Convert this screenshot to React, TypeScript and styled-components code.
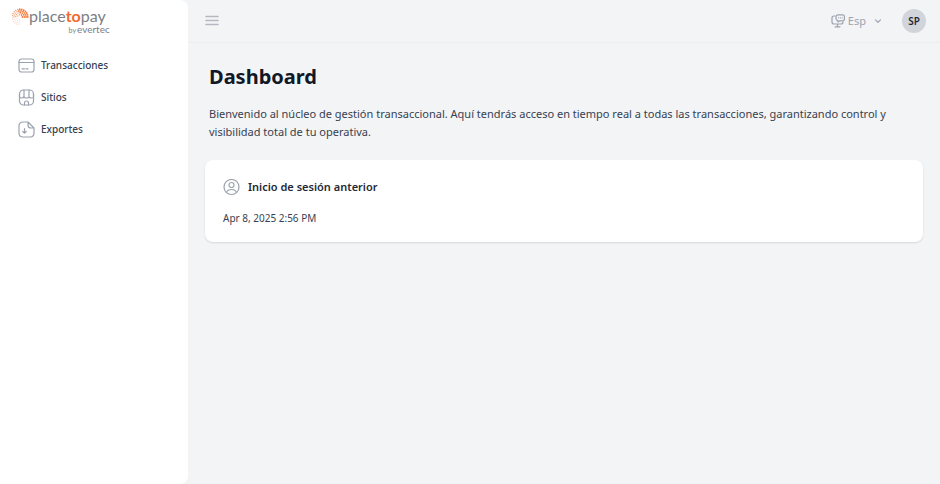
import React from "react";
import styled, { createGlobalStyle } from "styled-components";

const GlobalStyle = createGlobalStyle`
  *, *::before, *::after { box-sizing: border-box; }
  body {
    margin: 0;
    background: #f3f4f6;
    color: #1f2937;
    font-family: "Noto Sans", "Open Sans", sans-serif;
  }
  h1, h2, p, ul { margin: 0; padding: 0; }
  button { border: 0; padding: 0; background: none; font: inherit; color: inherit; cursor: pointer; }
`;

const Page = styled.div`
  display: flex;
  min-height: 100vh;
`;

const Sidebar = styled.aside`
  flex: 0 0 188px;
  background: #fff;
  border-radius: 0 8px 8px 0;
`;

const Logo = styled.a`
  display: flex;
  align-items: flex-start;
  height: 40px;
  padding: 8px 0 0 12px;
  text-decoration: none;
  color: #7b7f86;
`;

const Wordmark = styled.span`
  display: flex;
  flex-direction: column;
  align-items: flex-end;
  font-family: Lato, sans-serif;
`;

const Brand = styled.span`
  margin-right: 4px;
  font-size: 16px;
  line-height: 16px;
`;

const Accent = styled.span`
  color: #f26a2e;
  font-weight: 700;
`;

const Byline = styled.span`
  font-size: 10px;
  line-height: 10px;
`;

const By = styled.small`
  font-size: 7px;
  margin-right: 1px;
`;

const NavList = styled.ul`
  display: flex;
  flex-direction: column;
  gap: 8px;
  padding: 13px 12px;
  list-style: none;
`;

const NavLink = styled.a`
  display: flex;
  align-items: center;
  gap: 6px;
  height: 24px;
  padding-left: 6px;
  color: #374151;
  font-size: 10px;
  font-weight: 500;
  text-decoration: none;
`;

const Icon = styled.svg<{ $size: number }>`
  flex: none;
  width: ${(p) => p.$size}px;
  height: ${(p) => p.$size}px;
  fill: none;
  stroke: #9ca3af;
  stroke-width: 1.2;
  stroke-linecap: round;
  stroke-linejoin: round;
`;

const Content = styled.div`
  flex: 1;
  min-width: 0;
`;

const Topbar = styled.header`
  display: flex;
  align-items: center;
  justify-content: space-between;
  height: 43px;
  padding: 0 14px 1px 17px;
  border-bottom: 1px solid #eceef1;
`;

const MenuButton = styled.button`
  display: flex;
`;

const Actions = styled.div`
  display: flex;
  align-items: center;
  gap: 20px;
`;

const Language = styled.button`
  display: flex;
  align-items: center;
  gap: 3px;
  color: #9ca3af;
  font-size: 11px;
  line-height: 16px;
`;

const Chevron = styled(Icon)`
  margin-left: 5px;
`;

const Avatar = styled.button`
  width: 24px;
  height: 24px;
  border-radius: 50%;
  background: #d1d5db;
  color: #1f2937;
  font-size: 10px;
  font-weight: 600;
`;

const Main = styled.main`
  padding: 20px 17px;
`;

const Title = styled.h1`
  padding-left: 4px;
  color: #111827;
  font-size: 20px;
  line-height: 28px;
  font-weight: 700;
`;

const Intro = styled.p`
  padding: 14px 4px 0;
  font-size: 11px;
  line-height: 18px;
  color: #374151;
`;

const Card = styled.section`
  margin-top: 19px;
  padding: 18px 18px 16px;
  border-radius: 8px;
  background: #fff;
  box-shadow: 0 1px 2px rgba(0, 0, 0, 0.12);
`;

const CardHeading = styled.h2`
  display: flex;
  align-items: center;
  gap: 8px;
  font-size: 11px;
  line-height: 18px;
  font-weight: 600;
`;

const CardText = styled.p`
  margin-top: 14px;
  font-size: 10px;
  line-height: 16px;
  color: #374151;
`;

const dots: { x: number; y: number; r: number; o: number }[] = [];
[2.4, 4.3, 6.1, 7.8].forEach((radius) => {
  const count = Math.round(radius * 2.2) + 1;
  for (let i = 0; i < count; i++) {
    const t = i / (count - 1);
    const angle = Math.PI * (0.55 + t * 1.45);
    dots.push({
      x: 8 + Math.cos(angle) * radius,
      y: 9 + Math.sin(angle) * radius,
      r: t > 0.6 ? 0.9 : t > 0.3 ? 0.7 : 0.5,
      o: t > 0.6 ? 1 : t > 0.3 ? 0.7 : 0.4,
    });
  }
});

const LogoMark = () => (
  <Icon $size={17} viewBox="0 0 17 17" aria-hidden="true">
    {dots.map((d, i) => (
      <circle key={i} cx={d.x} cy={d.y} r={d.r} fill="#f47b3c" stroke="none" opacity={d.o} />
    ))}
  </Icon>
);

const CardIcon = () => (
  <Icon $size={17} viewBox="0 0 17 17" aria-hidden="true">
    <rect x="1" y="2" width="15" height="13" rx="2.5" />
    <path d="M1 5.5h15M4 11.8h2.5M8 11.8h2" />
  </Icon>
);

const StoreIcon = () => (
  <Icon $size={17} viewBox="0 0 17 17" aria-hidden="true">
    <rect x="1.500" y="1" width="14" height="15" rx="4" />
    <path d="M1.500 5v2.500q0 1.500 2 1.500T6 7.500Q6 9 8.500 9T11 7.500Q11 9 13.500 9t2-1.500V5M6 1v6.500M11 1v6.500M6.500 16v-2q0-2 2-2t2 2v2" />
  </Icon>
);

const ExportIcon = () => (
  <Icon $size={17} viewBox="0 0 17 17" aria-hidden="true">
    <path d="M10 1H5Q1 1 1 5v7q0 4 4 4h7q4 0 4-4V7zM10 1v3q0 3 3 3h3" />
    <path d="M6.500 7.500v4.500M4.800 10.500l1.700 1.700 1.700-1.700" />
  </Icon>
);

const navItems = [
  { label: "Transacciones", icon: <CardIcon /> },
  { label: "Sitios", icon: <StoreIcon /> },
  { label: "Exportes", icon: <ExportIcon /> },
];

export default function App() {
  return (
    <>
      <GlobalStyle />
      <Page>
        <Sidebar>
          <Logo href="#">
            <LogoMark />
            <Wordmark>
              <Brand>
                place<Accent>to</Accent>pay
              </Brand>
              <Byline>
                <By>by</By>evertec
              </Byline>
            </Wordmark>
          </Logo>
          <nav>
            <NavList>
              {navItems.map((item) => (
                <li key={item.label}>
                  <NavLink href="#">
                    {item.icon}
                    {item.label}
                  </NavLink>
                </li>
              ))}
            </NavList>
          </nav>
        </Sidebar>
        <Content>
          <Topbar>
            <MenuButton type="button" aria-label="Menu">
              <Icon $size={14} viewBox="0 0 14 14" aria-hidden="true">
                <path d="M1 2.500h12M1 6.500h12M1 10.500h12" strokeWidth="1.500" stroke="#b3b8c1" />
              </Icon>
            </MenuButton>
            <Actions>
              <Language type="button">
                <Icon $size={14} viewBox="0 0 14 14" aria-hidden="true">
                  <path d="M4 2H3Q1 2 1 4v4q0 2 2 2h7q2 0 2-2M6.500 10v2.500M4 12.800h5" />
                  <path d="M7 .8h4.500q2 0 2 2v2q0 2-2 2H9L7 8V6.700Q5 6.500 5 4.500V2.800q0-2 2-2zM7.500 3.800h.1M9.300 3.800h.1M11.100 3.800h.1" />
                </Icon>
                Esp
                <Chevron $size={8} viewBox="0 0 8 8" aria-hidden="true">
                  <path d="M1.500 2.800 4 5.300l2.500-2.500" />
                </Chevron>
              </Language>
              <Avatar type="button">SP</Avatar>
            </Actions>
          </Topbar>
          <Main>
            <Title>Dashboard</Title>
            <Intro>
              Bienvenido al núcleo de gestión transaccional. Aquí tendrás acceso en tiempo real a
              todas las transacciones, garantizando control y visibilidad total de tu operativa.
            </Intro>
            <Card>
              <CardHeading>
                <Icon $size={17} viewBox="0 0 17 17" aria-hidden="true">
                  <circle cx="8.500" cy="8" r="7.500" />
                  <circle cx="8.500" cy="6" r="2.500" />
                  <path d="M3.500 13.500q1-3 5-3t5 3" />
                </Icon>
                Inicio de sesión anterior
              </CardHeading>
              <CardText>Apr 8, 2025 2:56 PM</CardText>
            </Card>
          </Main>
        </Content>
      </Page>
    </>
  );
}
